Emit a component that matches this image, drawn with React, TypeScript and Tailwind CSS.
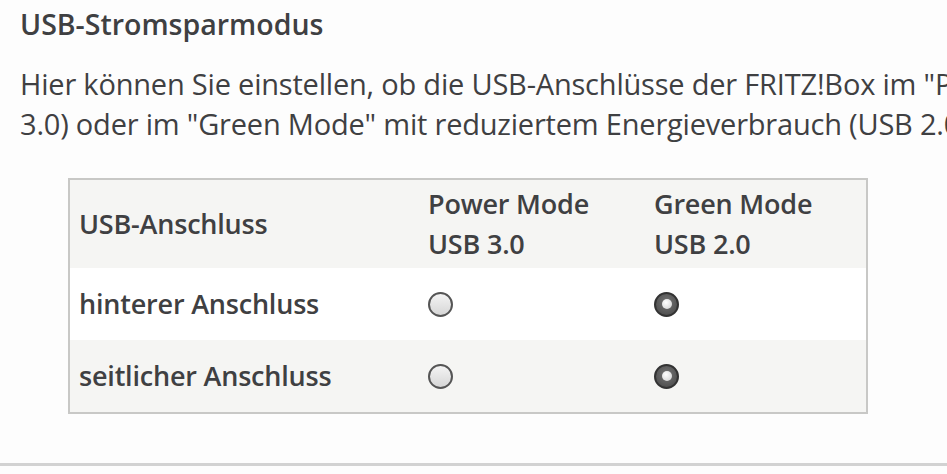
import React from "react";

function Radio({ checked }: { checked?: boolean }) {
  if (checked) {
    return (
      <span className="inline-flex h-[25px] w-[25px] items-center justify-center rounded-full border-2 border-[#333] bg-[radial-gradient(circle_at_50%_40%,#777,#444)]">
        <span className="h-[10px] w-[10px] rounded-full bg-[radial-gradient(circle_at_40%_35%,#fff,#cfcfcf)]" />
      </span>
    );
  }
  return (
    <span className="inline-block h-[25px] w-[25px] rounded-full border-2 border-[#555] bg-[linear-gradient(to_bottom,#f4f4f4,#d6d6d6)]" />
  );
}

const rows = [
  { label: "hinterer Anschluss", green: true },
  { label: "seitlicher Anschluss", green: true },
];

export default function App() {
  return (
    <div className="h-[474px] w-[947px] overflow-hidden bg-[#fdfdfd] text-[#3f4042] font-['Open_Sans','Liberation_Sans',sans-serif]">
      <div className="px-5 pt-[6px]">
        <h2 className="text-[28.5px] font-semibold leading-[36px]">USB-Stromsparmodus</h2>
        <div className="mt-[22px] whitespace-nowrap text-[29px] leading-[40px] tracking-[-0.2px]">
          <p>Hier können Sie einstellen, ob die USB-Anschlüsse der FRITZ!Box im "Power Mode" (USB</p>
          <p>3.0) oder im "Green Mode" mit reduziertem Energieverbrauch (USB 2.0) betrieben werden.</p>
        </div>
      </div>

      <div className="ml-[68px] mt-[34px] w-[800px] border-2 border-[#c8c8c6]">
        <table className="w-full border-collapse text-[27px] font-semibold leading-[40px] tracking-[-0.2px]">
          <thead>
            <tr className="bg-[#f5f5f3]">
              <th className="h-[88px] w-[349px] pl-[9px] text-left font-semibold">USB-Anschluss</th>
              <th className="w-[226px] pl-[9px] text-left font-semibold">
                Power Mode
                <br />
                USB 3.0
              </th>
              <th className="pl-[9px] text-left font-semibold">
                Green Mode
                <br />
                USB 2.0
              </th>
            </tr>
          </thead>
          <tbody>
            {rows.map((r, i) => (
              <tr key={r.label} className={i % 2 === 0 ? "bg-white" : "bg-[#f5f5f3]"}>
                <td className="h-[72px] pl-[9px]">{r.label}</td>
                <td className="pl-[9px] align-middle">
                  <span className="flex items-center">
                    <Radio checked={!r.green} />
                  </span>
                </td>
                <td className="pl-[9px] align-middle">
                  <span className="flex items-center">
                    <Radio checked={r.green} />
                  </span>
                </td>
              </tr>
            ))}
          </tbody>
        </table>
      </div>

      <div className="mt-[49px] h-[3px] w-full bg-[#d2d2d2]" />
    </div>
  );
}
